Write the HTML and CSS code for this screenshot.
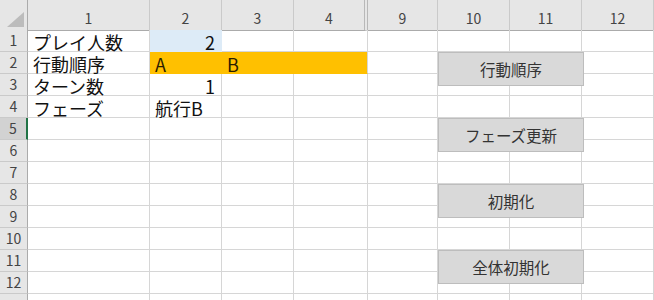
FILE: index.html
```html
<!DOCTYPE html>
<html lang="ja">
<head>
    <meta charset="UTF-8" />
    <meta name="viewport" content="width=device-width, initial-scale=1.0" />
    <title>Sheet1</title>
    <link rel="stylesheet" href="styles.css">
</head>
<body>
    <div id="sheet">
        <div class="row head">
            <div class="corner"><span class="tri"></span></div>
            <div class="ch">1</div>
            <div class="ch">2</div>
            <div class="ch">3</div>
            <div class="ch hidden-after">4</div>
            <div class="ch">9</div>
            <div class="ch">10</div>
            <div class="ch">11</div>
            <div class="ch">12</div>
        </div>

        <div class="row">
            <div class="rh">1</div>
            <div class="c">プレイ人数</div>
            <div class="c num blue">2</div>
            <div class="c"></div>
            <div class="c"></div>
            <div class="c"></div>
            <div class="c"></div>
            <div class="c"></div>
            <div class="c"></div>
        </div>
        <div class="row">
            <div class="rh">2</div>
            <div class="c">行動順序</div>
            <div class="c orange">A</div>
            <div class="c orange">B</div>
            <div class="c orange last"></div>
            <div class="c"></div>
            <div class="c"></div>
            <div class="c"></div>
            <div class="c"></div>
        </div>
        <div class="row">
            <div class="rh">3</div>
            <div class="c">ターン数</div>
            <div class="c num">1</div>
            <div class="c"></div>
            <div class="c"></div>
            <div class="c"></div>
            <div class="c"></div>
            <div class="c"></div>
            <div class="c"></div>
        </div>
        <div class="row">
            <div class="rh">4</div>
            <div class="c">フェーズ</div>
            <div class="c">航行B</div>
            <div class="c"></div>
            <div class="c"></div>
            <div class="c"></div>
            <div class="c"></div>
            <div class="c"></div>
            <div class="c"></div>
        </div>
        <div class="row">
            <div class="rh active">5</div>
            <div class="c"></div><div class="c"></div><div class="c"></div><div class="c"></div>
            <div class="c"></div><div class="c"></div><div class="c"></div><div class="c"></div>
        </div>
        <div class="row">
            <div class="rh">6</div>
            <div class="c"></div><div class="c"></div><div class="c"></div><div class="c"></div>
            <div class="c"></div><div class="c"></div><div class="c"></div><div class="c"></div>
        </div>
        <div class="row">
            <div class="rh">7</div>
            <div class="c"></div><div class="c"></div><div class="c"></div><div class="c"></div>
            <div class="c"></div><div class="c"></div><div class="c"></div><div class="c"></div>
        </div>
        <div class="row">
            <div class="rh">8</div>
            <div class="c"></div><div class="c"></div><div class="c"></div><div class="c"></div>
            <div class="c"></div><div class="c"></div><div class="c"></div><div class="c"></div>
        </div>
        <div class="row">
            <div class="rh">9</div>
            <div class="c"></div><div class="c"></div><div class="c"></div><div class="c"></div>
            <div class="c"></div><div class="c"></div><div class="c"></div><div class="c"></div>
        </div>
        <div class="row">
            <div class="rh">10</div>
            <div class="c"></div><div class="c"></div><div class="c"></div><div class="c"></div>
            <div class="c"></div><div class="c"></div><div class="c"></div><div class="c"></div>
        </div>
        <div class="row">
            <div class="rh">11</div>
            <div class="c"></div><div class="c"></div><div class="c"></div><div class="c"></div>
            <div class="c"></div><div class="c"></div><div class="c"></div><div class="c"></div>
        </div>
        <div class="row">
            <div class="rh">12</div>
            <div class="c"></div><div class="c"></div><div class="c"></div><div class="c"></div>
            <div class="c"></div><div class="c"></div><div class="c"></div><div class="c"></div>
        </div>
        <div class="row">
            <div class="rh"></div>
            <div class="c"></div><div class="c"></div><div class="c"></div><div class="c"></div>
            <div class="c"></div><div class="c"></div><div class="c"></div><div class="c"></div>
        </div>

        <!-- macro buttons floating over the grid -->
        <button class="macro" id="btn-order">行動順序</button>
        <button class="macro" id="btn-phase">フェーズ更新</button>
        <button class="macro" id="btn-init">初期化</button>
        <button class="macro" id="btn-reset">全体初期化</button>
    </div>
</body>
</html>
```

FILE: styles.css
```css
body {
    margin: 0;
    padding: 0;
    overflow: hidden;
    background: #ffffff;
}

#sheet {
    position: relative;
    width: 654px;
    height: 300px;
    overflow: hidden;
    font-family: "Noto Sans CJK JP", "Noto Sans", sans-serif;
}

.row {
    display: grid;
    grid-template-columns: 28px 122px 72px 72px 74px 70px 72px 72px 72px;
    height: 22px;
}

.row.head {
    height: 30px;
}

/* column / row headers */
.corner,
.ch,
.rh {
    box-sizing: border-box;
    background-color: #e6e6e6;
    color: #444;
    font-size: 14px;
}

.corner {
    display: flex;
    justify-content: flex-end;
    align-items: flex-end;
    padding: 0 3px 3px 0;
    border-right: 1px solid #ababab;
    border-bottom: 1px solid #ababab;
}

.tri {
    width: 0;
    height: 0;
    border-left: 17px solid transparent;
    border-bottom: 15px solid #bcbcbc;
}

.ch {
    text-align: center;
    line-height: 24px;
    padding-top: 6px;
    border-right: 1px solid #cacaca;
    border-bottom: 1px solid #ababab;
}

.ch.hidden-after {
    border-right: 4px double #b8b8b8;
}

.rh {
    text-align: center;
    line-height: 21px;
    border-right: 1px solid #ababab;
    border-bottom: 1px solid #cacaca;
}

.rh.active {
    background-color: #d2d2d2;
    border-right: 2px solid #217346;
}

/* cells */
.c {
    box-sizing: border-box;
    padding: 3px 5px 0;
    font-size: 18px;
    line-height: 18px;
    color: #111;
    white-space: nowrap;
    border-right: 1px solid #d6d6d6;
    border-bottom: 1px solid #d6d6d6;
}

.num {
    text-align: right;
    padding-right: 6px;
}

.blue {
    background-color: #ddebf7;
    border-color: #ddebf7;
}

.orange {
    background-color: #ffc000;
    border-color: #ffc000;
    color: #2a1c00;
}

.orange.last {
    border-right-color: #d6d6d6;
}

/* buttons */
.macro {
    position: absolute;
    left: 438px;
    width: 146px;
    height: 34px;
    margin: 0;
    padding: 0;
    box-sizing: border-box;
    background-color: #d9d9d9;
    border: 1px solid #bdbdbd;
    color: #333;
    font-family: "Noto Sans CJK JP", "Noto Sans", sans-serif;
    font-size: 15.5px;
    line-height: 32px;
}

#btn-order {
    top: 52px;
}

#btn-phase {
    top: 118px;
}

#btn-init {
    top: 184px;
}

#btn-reset {
    top: 250px;
}
```
